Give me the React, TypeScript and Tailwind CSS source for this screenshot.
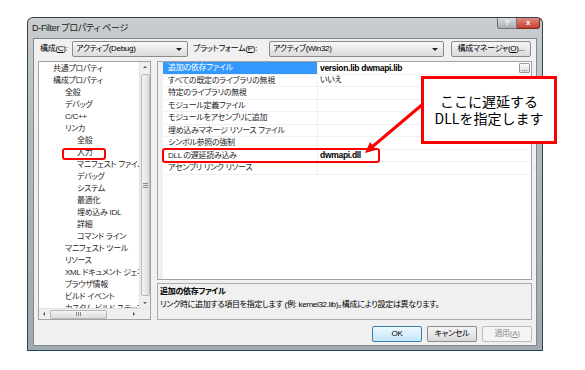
import React from "react";

const tree: [string, number][] = [
  ["共通プロパティ", 0],
  ["構成プロパティ", 0],
  ["全般", 1],
  ["デバッグ", 1],
  ["C/C++", 1],
  ["リンカ", 1],
  ["全般", 2],
  ["入力", 2],
  ["マニフェスト ファイル", 2],
  ["デバッグ", 2],
  ["システム", 2],
  ["最適化", 2],
  ["埋め込み IDL", 2],
  ["詳細", 2],
  ["コマンド ライン", 2],
  ["マニフェスト ツール", 1],
  ["リソース", 1],
  ["XML ドキュメント ジェネレータ", 1],
  ["ブラウザ情報", 1],
  ["ビルド イベント", 1],
  ["カスタム ビルド ステップ", 1],
];

const props = [
  { name: "追加の依存ファイル", value: "version.lib dwmapi.lib", bold: true, selected: true },
  { name: "すべての既定のライブラリの無視", value: "いいえ" },
  { name: "特定のライブラリの無視", value: "" },
  { name: "モジュール定義ファイル", value: "" },
  { name: "モジュールをアセンブリに追加", value: "" },
  { name: "埋め込みマネージ リソース ファイル", value: "" },
  { name: "シンボル参照の強制", value: "" },
  { name: "DLL の遅延読み込み", value: "dwmapi.dll", bold: true },
  { name: "アセンブリ リンク リソース", value: "" },
];

const indent = ["pl-[14px]", "pl-[26px]", "pl-[38px]"];

function Combo({ text, width }: { text: string; width: string }) {
  return (
    <div
      className={`${width} h-[16px] flex items-center justify-between pl-[3px] pr-[5px] rounded-[2px] border border-[#8a8a8a] bg-gradient-to-b from-[#f7f7f7] to-[#dcdcdc]`}
    >
      <span className="whitespace-nowrap">{text}</span>
      <span className="w-0 h-0 border-l-[3px] border-r-[3px] border-t-[3px] border-l-transparent border-r-transparent border-t-[#222]" />
    </div>
  );
}

function TreePanel() {
  return (
    <div className="w-[113px] h-[259px] border border-[#a0a4a8] bg-white flex flex-col">
      <div className="flex flex-1 min-h-0">
        <div className="flex-1 overflow-hidden pt-[1px] text-[#1e1e1e]">
          {tree.map(([label, level], i) => (
            <div key={i} className={`h-[12px] leading-[12px] whitespace-nowrap ${indent[level]}`}>
              {label}
            </div>
          ))}
        </div>
        {/* vertical scrollbar */}
        <div className="w-[11px] bg-[#efefef] border-l border-[#e2e2e2] flex flex-col items-center">
          <div className="h-[10px] flex items-center justify-center">
            <span className="w-0 h-0 border-l-[2px] border-r-[2px] border-b-[2px] border-l-transparent border-r-transparent border-b-[#555]" />
          </div>
          <div className="w-[9px] flex-1 my-[2px] rounded-[2px] border border-[#b8b8b8] bg-gradient-to-r from-[#f4f4f4] to-[#dcdcdc] flex items-center justify-center">
            <div className="flex flex-col gap-[1px]">
              <div className="w-[5px] h-[1px] bg-[#8a8a8a]" />
              <div className="w-[5px] h-[1px] bg-[#8a8a8a]" />
              <div className="w-[5px] h-[1px] bg-[#8a8a8a]" />
            </div>
          </div>
          <div className="h-[10px] flex items-center justify-center">
            <span className="w-0 h-0 border-l-[2px] border-r-[2px] border-t-[2px] border-l-transparent border-r-transparent border-t-[#555]" />
          </div>
        </div>
      </div>
      {/* horizontal scrollbar */}
      <div className="h-[11px] flex">
        <div className="flex-1 bg-[#efefef] border-t border-[#e2e2e2] flex items-center">
          <div className="w-[10px] flex items-center justify-center">
            <span className="w-0 h-0 border-t-[2px] border-b-[2px] border-r-[2px] border-t-transparent border-b-transparent border-r-[#555]" />
          </div>
          <div className="w-[57px] h-[9px] ml-[1px] rounded-[2px] border border-[#b8b8b8] bg-gradient-to-b from-[#f4f4f4] to-[#dcdcdc] flex items-center justify-center">
            <div className="flex gap-[1px]">
              <div className="w-[1px] h-[4px] bg-[#8a8a8a]" />
              <div className="w-[1px] h-[4px] bg-[#8a8a8a]" />
              <div className="w-[1px] h-[4px] bg-[#8a8a8a]" />
            </div>
          </div>
          <div className="flex-1" />
          <div className="w-[10px] flex items-center justify-center">
            <span className="w-0 h-0 border-t-[2px] border-b-[2px] border-l-[2px] border-t-transparent border-b-transparent border-l-[#555]" />
          </div>
        </div>
        <div className="w-[11px] bg-[#efefef] border-t border-[#e2e2e2]" />
      </div>
    </div>
  );
}

function PropertyGrid() {
  return (
    <div className="h-[219px] border border-[#a0a4a8] bg-white flex">
      <div className="w-[5px] bg-[#f0f0f0]" />
      <div className="flex-1 flex flex-col">
        {props.map((p, i) => (
          <div key={i} className="h-[12.5px] flex border-b border-[#edf0f5]">
            <div
              className={`w-[155px] pl-[5px] leading-[12px] whitespace-nowrap border-r border-[#edf0f5] ${
                p.selected ? "bg-[#3399ff] text-white" : "text-[#1e1e1e]"
              }`}
            >
              {p.name}
            </div>
            <div className="flex-1 flex items-center justify-between pl-[2px] pr-[1px]">
              <span className={`leading-[12px] ${p.bold ? "font-bold text-[8.5px]" : ""}`}>{p.value}</span>
              {p.selected && (
                <span className="w-[11px] h-[10px] border border-[#9a9a9a] rounded-[1px] bg-gradient-to-b from-[#fafafa] to-[#e0e0e0] text-[7px] leading-[10px] text-center tracking-normal">
                  ...
                </span>
              )}
            </div>
          </div>
        ))}
      </div>
    </div>
  );
}

function Btn({ children, kind }: { children: React.ReactNode; kind: "def" | "norm" | "dis" }) {
  const cls =
    kind === "def"
      ? "border-[#3c7fb1] bg-gradient-to-b from-[#eef8fe] to-[#c4e6fb] text-black"
      : kind === "norm"
        ? "border-[#8a8a8a] bg-gradient-to-b from-[#f5f5f5] to-[#dadada] text-black"
        : "border-[#b8bcbf] bg-[#f4f4f4] text-[#8d8d8d]";
  return (
    <div className={`w-[50px] h-[16px] rounded-[2px] border flex items-center justify-center whitespace-nowrap ${cls}`}>
      {children}
    </div>
  );
}

function Window() {
  return (
    <div className="w-[516px] h-[334px] flex flex-col rounded-t-[6px] border border-[#34434a] border-b-[#1d4652] bg-[linear-gradient(180deg,#c9cdcf_0%,#b3b9bc_35%,#a0a9ad_100%)] px-[5px] pb-[4px]">
      {/* title bar */}
      <div className="h-[20px] flex items-start -ml-[1px] -mr-[3px]">
        <div className="flex-1 pt-[3px] text-[9px] leading-[14px] text-[#1a1a1a] whitespace-nowrap">D-Filter プロパティ ページ</div>
        <div className="flex">
          <div className="w-[20px] h-[11px] rounded-bl-[3px] border border-[#6b7478] border-t-0 bg-gradient-to-b from-[#d8dcde] to-[#a8b0b4] text-white text-[8px] leading-[10px] text-center font-bold">
            ?
          </div>
          <div className="w-[23px] h-[11px] rounded-br-[3px] border border-[#7a2a22] border-t-0 border-l-0 bg-gradient-to-b from-[#e0897d] to-[#c3402f] text-white text-[8px] leading-[10px] text-center font-bold">
            x
          </div>
        </div>
      </div>
      {/* client */}
      <div className="flex-1 bg-[#f0f0f0] border border-[#7f8a8f] flex flex-col px-[4px] pt-[2px]">
        <div className="flex items-center h-[16px]">
          <div className="w-[34px] pl-[2px] whitespace-nowrap">
            構成(<u>C</u>):
          </div>
          <Combo text="アクティブ(Debug)" width="w-[116px]" />
          <div className="w-[81px] pl-[5px] whitespace-nowrap">
            プラットフォーム(<u>P</u>):
          </div>
          <Combo text="アクティブ(Win32)" width="w-[175px]" />
          <div className="ml-[7px] w-[80px] h-[16px] rounded-[2px] border border-[#8a8a8a] bg-gradient-to-b from-[#f5f5f5] to-[#dadada] flex items-center justify-center whitespace-nowrap">
            構成マネージャ(<u>O</u>)...
          </div>
        </div>
        <div className="mt-[4px] flex gap-[6px]">
          <TreePanel />
          <div className="flex-1 flex flex-col gap-[3px]">
            <PropertyGrid />
            <div className="h-[37px] border border-[#a8acb0] px-[2px] pt-[2px]">
              <div className="font-bold leading-[12px]">追加の依存ファイル</div>
              <div className="leading-[13px] whitespace-nowrap">
                リンク時に追加する項目を指定します (例: kernel32.lib)。構成により設定は異なります。
              </div>
            </div>
          </div>
        </div>
        <div className="mt-[6px] flex justify-end gap-[5px]">
          <Btn kind="def">OK</Btn>
          <Btn kind="norm">キャンセル</Btn>
          <Btn kind="dis">
            適用(<u>A</u>)
          </Btn>
        </div>
      </div>
    </div>
  );
}

export default function App() {
  return (
    <div className="relative w-[585px] h-[370px] bg-white overflow-hidden text-[8px] tracking-[-0.3px] text-black font-['Liberation_Sans','Noto_Sans_CJK_JP',sans-serif] [font-feature-settings:'palt']">
      <div className="pl-[27px] pt-[17px]">
        <Window />
      </div>

      {/* annotations */}
      <div className="absolute left-[62px] top-[148px] w-[44px] h-[12px] border-[2px] border-[#f00] rounded-[3px]" />
      <div className="absolute left-[162px] top-[148px] w-[218px] h-[15px] border-[2px] border-[#f00] rounded-[3px]" />
      <svg className="absolute inset-0 pointer-events-none" width="585" height="370">
        <line x1="423" y1="104" x2="372" y2="147" stroke="#f00" strokeWidth="3" />
        <polygon points="365,153 376,150 370,142" fill="#f00" />
      </svg>
      <div className="absolute left-[421px] top-[76px] w-[136px] h-[68px] bg-white border-[3px] border-[#f00] flex flex-col items-center justify-center text-[14px] leading-[17px] tracking-normal font-['Noto_Sans_CJK_JP',sans-serif] [font-feature-settings:normal]">
        <div>ここに遅延する</div>
        <div>DLLを指定します</div>
      </div>
    </div>
  );
}
